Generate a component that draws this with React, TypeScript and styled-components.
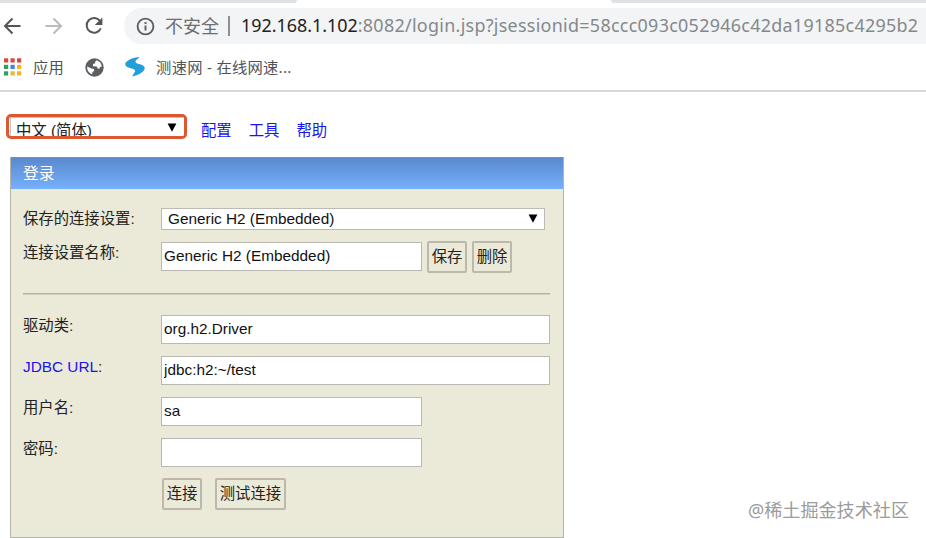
import { useState } from "react";
import styled, { createGlobalStyle } from "styled-components";

const GlobalStyle = createGlobalStyle`
  * {
    box-sizing: border-box;
  }

  body {
    margin: 0;
    background-color: #fff;
    color: #222;
    font-family: "Liberation Sans", "Noto Sans CJK SC", sans-serif;
    font-size: 15.35px;
    overflow: hidden;
  }
`;

const Page = styled.div`
  position: relative;
  width: 926px;
  height: 538px;
  overflow: hidden;
`;

const Browser = styled.header`
  height: 92px;
  border-bottom: 2px solid #d7d9d9;
  font-family: "Noto Sans", "Noto Sans CJK SC", sans-serif;
`;

const TabStrip = styled.div`
  height: 3px;
  background-color: #dfe1e2;
  padding-left: 296px;
`;

const ActiveTab = styled.div`
  width: 316px;
  height: 3px;
  background-color: #fff;
  border-radius: 3px 3px 0 0;
`;

const Toolbar = styled.div`
  display: flex;
  align-items: center;
  height: 46px;
  padding: 0 0 0 2px;
`;

const NavIcon = styled.svg`
  display: block;
  flex: none;
  width: 22px;
  height: 22px;
  margin-right: 18.5px;
`;

const AddressBar = styled.div`
  display: flex;
  align-items: center;
  flex: 1;
  height: 36px;
  padding-left: 12.5px;
  background-color: #f2f4f5;
  border-radius: 18px 0 0 18px;
  white-space: nowrap;
`;

const InfoIcon = styled.svg`
  flex: none;
  width: 19px;
  height: 19px;
`;

const Insecure = styled.span`
  margin-left: 10px;
  font-size: 18px;
  line-height: 36px;
  color: #6b6e71;
`;

const Divider = styled.span`
  width: 1.5px;
  height: 20px;
  margin: 0 11.5px 0 9px;
  background-color: #8d9093;
`;

const Url = styled.span`
  font-size: 17.9px;
  line-height: 34px;
  height: 36px;
  letter-spacing: 0.3px;
  color: #85888b;

  b {
    font-weight: normal;
    letter-spacing: 0;
    color: #1f2124;
  }
`;

const Bookmarks = styled.div`
  display: flex;
  align-items: center;
  height: 36px;
  padding-left: 4px;
  font-size: 15.3px;
  color: #505356;
`;

const Bookmark = styled.div<{ $gap: number }>`
  display: flex;
  align-items: center;
  margin-right: 21px;
  white-space: nowrap;

  svg {
    display: block;
    margin-right: ${(props) => props.$gap}px;
  }
`;

const BookmarkTitle = styled.span`
  padding-bottom: 2px;
  letter-spacing: 0.25px;
`;

const Console = styled.main`
  padding: 22px 0 0 6px;
`;

const Menu = styled.nav`
  display: flex;
  align-items: flex-start;
  height: 43px;
`;

const LanguageBox = styled.div`
  position: relative;
  width: 181px;
  height: 25px;
  margin-right: 14px;
  border: 3px solid #dd5730;
  border-radius: 5px;
  overflow: hidden;
`;

const LanguageSelect = styled.select`
  display: block;
  width: 174px;
  height: 26px;
  margin-left: 1px;
  padding: 0 0 1px 5px;
  border: 1px solid #c5c5c5;
  border-width: 1px 0 0 1px;
  background-color: #fff;
  color: #222;
  font: inherit;
  appearance: none;
`;

const Arrow = styled.svg`
  position: absolute;
  top: 6px;
  right: 7.5px;
  width: 10px;
  height: 9px;
  pointer-events: none;
`;

const MenuLink = styled.a`
  margin-right: 17px;
  line-height: 33px;
  color: #1a12f0;
  cursor: pointer;
`;

const Panel = styled.form`
  width: 554px;
  height: 381px;
  margin-left: 4px;
  border: 1px solid #b4b4aa;
  background-color: #ebe9d8;
`;

const PanelTitle = styled.h1`
  height: 32px;
  margin: -1px 0 0;
  padding-left: 12px;
  border-top: 1px solid #6d8fbd;
  background: linear-gradient(#5a89cd, #76b0fb);
  color: #fff;
  font-size: 15.8px;
  font-weight: normal;
  line-height: 31px;
`;

const Fields = styled.div`
  padding: 19px 13px 0 12px;
`;

const Row = styled.div<{ $height: number }>`
  display: grid;
  grid-template-columns: 138px 1fr;
  align-items: start;
  height: ${(props) => props.$height}px;
`;

const Label = styled.label`
  line-height: 22px;

  a {
    color: #1a12f0;
  }
`;

const Controls = styled.div<{ $gap?: number }>`
  display: flex;
  align-items: flex-start;
  gap: ${(props) => props.$gap ?? 5}px;
`;

const Actions = styled(Controls)`
  padding-left: 1px;
`;

const SelectBox = styled.div`
  position: relative;
  width: 384px;
  height: 22px;
`;

const Select = styled.select`
  display: block;
  width: 100%;
  height: 100%;
  padding: 0 0 2px 6px;
  border: 1px solid #bcbcb4;
  border-radius: 0;
  background-color: #fff;
  color: #111;
  font: inherit;
  appearance: none;
`;

const Input = styled.input<{ $wide?: boolean }>`
  width: ${(props) => (props.$wide ? 389 : 261)}px;
  height: 29px;
  padding: 0 2px 2px;
  border: 1px solid #b9b9b1;
  outline: none;
  background-color: #fff;
  color: #111;
  font: inherit;
`;

const Button = styled.button`
  height: 32px;
  margin-top: -1px;
  padding: 0 2.7px 1px;
  border: 2px solid #bcb9ac;
  border-radius: 2px;
  background-color: #ebe9d8;
  color: #222;
  font: inherit;
  line-height: 27px;
  white-space: nowrap;
`;

const Rule = styled.hr`
  height: 2px;
  margin: 0 0 20px;
  border: 0;
  border-top: 1px solid #b0afaa;
  border-bottom: 1px solid #d0cfc6;
`;

const Watermark = styled.div`
  position: absolute;
  right: 17px;
  bottom: 15px;
  color: #9b9b9b;
  font-size: 18.1px;
  line-height: 26px;
  font-family: "Noto Sans", "Noto Sans CJK SC", sans-serif;
`;

const appColors = [
  "#dc4538", "#dc4538", "#dc4538",
  "#31a05a", "#3f83ee", "#f3b42c",
  "#31a05a", "#f3b42c", "#f3b42c",
];

function AppsIcon() {
  return (
    <svg width="18" height="18" viewBox="0 0 18 18">
      {appColors.map((color, i) => (
        <rect
          key={i}
          x={(i % 3) * 6.5}
          y={Math.floor(i / 3) * 6.5 + 0.3}
          width="4.2"
          height="4.2"
          fill={color}
        />
      ))}
    </svg>
  );
}

function GlobeIcon() {
  return (
    <svg width="19" height="19" viewBox="0 0 19 19">
      <circle cx="9.5" cy="9.5" r="9.2" fill="#5c5f62" />
      <path
        d="M11.6 2.2 10.2 3.4 10.2 5.2 8 6.1 8 8.2 11.8 8.6 12.7 10.6 14.4 10.8 14.8 9.2 16.8 8.6A7.4 7.4 0 0 0 11.6 2.2Z"
        fill="#fff"
      />
      <path
        d="M2.2 8.6 6.3 10.5 9 11.1 9.2 13 7.4 14 7.2 16.4A7.4 7.4 0 0 1 2.2 8.6Z"
        fill="#fff"
      />
    </svg>
  );
}

function SpeedIcon() {
  return (
    <svg width="20" height="20" viewBox="0 0 20 20" fill="#229edb">
      <path d="M14.6 0C8 .7 2.3 2.8.3 6.2c-.8 3 2.6 4.5 6.5 5.4 2.8.7 3.9 1.8 3 3.5L7 19.6c6.2-1.3 11.4-4.2 12.6-7.6.7-2.9-2.2-4.2-5.7-5.1-3.3-.9-4.1-1.8-3-3.3Z" />
    </svg>
  );
}

function DownArrow() {
  return (
    <Arrow viewBox="0 0 10 9">
      <path d="M.6.4h8.8L5 8.7Z" fill="#000" />
    </Arrow>
  );
}

function BrowserBar() {
  return (
    <Browser>
      <TabStrip>
        <ActiveTab />
      </TabStrip>
      <Toolbar>
        <NavIcon viewBox="0 0 22 22" fill="none" stroke="#54575a" strokeWidth="2">
          <path d="M18.5 11H3.5M10.5 3.5 3 11l7.5 7.5" />
        </NavIcon>
        <NavIcon viewBox="0 0 22 22" fill="none" stroke="#b9bbbd" strokeWidth="2">
          <path d="M2.5 11h15M10.5 3.5 18 11l-7.5 7.5" />
        </NavIcon>
        <NavIcon viewBox="0 0 22 22" fill="none" stroke="#54575a" strokeWidth="2">
          <path d="M17 5.9A7.4 7.4 0 1 0 17.8 13.4" />
          <path d="M19.4 2.4v7.6h-7.6Z" fill="#54575a" stroke="none" />
        </NavIcon>
        <AddressBar>
          <InfoIcon viewBox="0 0 19 19" fill="none" stroke="#5c5f62" strokeWidth="1.9">
            <circle cx="9.5" cy="9.5" r="7.9" />
            <path d="M9.5 8.5v5M9.5 5v2" />
          </InfoIcon>
          <Insecure>不安全</Insecure>
          <Divider />
          <Url>
            <b>192.168.1.102</b>:8082/login.jsp?jsessionid=58ccc093c052946c42da19185c4295b2
          </Url>
        </AddressBar>
      </Toolbar>
      <Bookmarks>
        <Bookmark $gap={11}>
          <AppsIcon />
          <BookmarkTitle>应用</BookmarkTitle>
        </Bookmark>
        <Bookmark $gap={0}>
          <GlobeIcon />
        </Bookmark>
        <Bookmark $gap={11}>
          <SpeedIcon />
          <BookmarkTitle>测速网 - 在线网速...</BookmarkTitle>
        </Bookmark>
      </Bookmarks>
    </Browser>
  );
}

function Login() {
  const [name, setName] = useState("Generic H2 (Embedded)");
  const [driver, setDriver] = useState("org.h2.Driver");
  const [url, setUrl] = useState("jdbc:h2:~/test");
  const [user, setUser] = useState("sa");
  const [password, setPassword] = useState("");
  return (
    <Panel onSubmit={(e) => e.preventDefault()}>
      <PanelTitle>登录</PanelTitle>
      <Fields>
        <Row $height={34}>
          <Label>保存的连接设置:</Label>
          <SelectBox>
            <Select>
              <option>Generic H2 (Embedded)</option>
            </Select>
            <DownArrow />
          </SelectBox>
        </Row>
        <Row $height={51}>
          <Label>连接设置名称:</Label>
          <Controls>
            <Input value={name} onChange={(e) => setName(e.target.value)} />
            <Button type="button">保存</Button>
            <Button type="button">删除</Button>
          </Controls>
        </Row>
        <Rule />
        <Row $height={41}>
          <Label>驱动类:</Label>
          <Input $wide value={driver} onChange={(e) => setDriver(e.target.value)} />
        </Row>
        <Row $height={41}>
          <Label>
            <a>JDBC URL</a>:
          </Label>
          <Input $wide value={url} onChange={(e) => setUrl(e.target.value)} />
        </Row>
        <Row $height={41}>
          <Label>用户名:</Label>
          <Input value={user} onChange={(e) => setUser(e.target.value)} />
        </Row>
        <Row $height={41}>
          <Label>密码:</Label>
          <Input
            type="password"
            value={password}
            onChange={(e) => setPassword(e.target.value)}
          />
        </Row>
        <Row $height={41}>
          <span />
          <Actions $gap={13}>
            <Button type="submit">连接</Button>
            <Button type="button">测试连接</Button>
          </Actions>
        </Row>
      </Fields>
    </Panel>
  );
}

function App() {
  return (
    <Page>
      <GlobalStyle />
      <BrowserBar />
      <Console>
        <Menu>
          <LanguageBox>
            <LanguageSelect>
              <option>中文 (简体)</option>
            </LanguageSelect>
            <DownArrow />
          </LanguageBox>
          <MenuLink>配置</MenuLink>
          <MenuLink>工具</MenuLink>
          <MenuLink>帮助</MenuLink>
        </Menu>
        <Login />
      </Console>
      <Watermark>@稀土掘金技术社区</Watermark>
    </Page>
  );
}

export default App;
